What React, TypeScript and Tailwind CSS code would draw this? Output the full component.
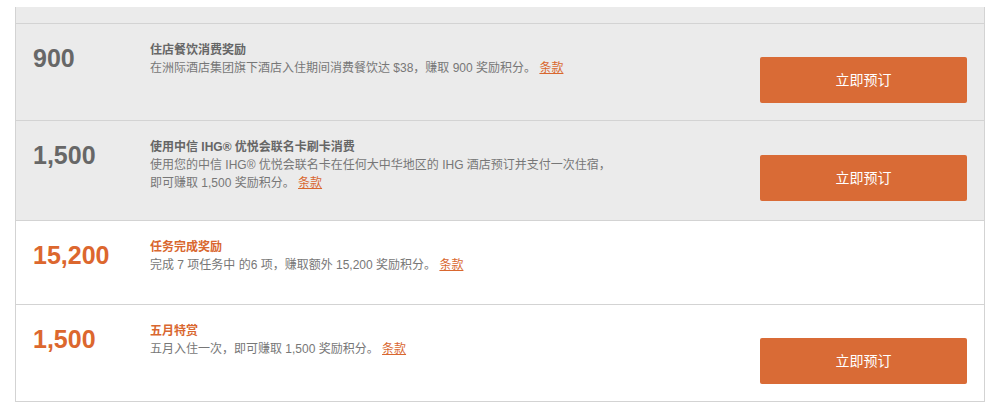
type Offer = {
  points: string;
  title: string;
  lines: string[];
  active: boolean;
  rowH: string;
  btnTop: string | null;
};

const OFFERS: Offer[] = [
  {
    points: '900',
    title: '住店餐饮消费奖励',
    lines: ['在洲际酒店集团旗下酒店入住期间消费餐饮达 $38，赚取 900 奖励积分。'],
    active: false,
    rowH: 'h-[97px]',
    btnTop: 'pt-[33px]',
  },
  {
    points: '1,500',
    title: '使用中信 IHG® 优悦会联名卡刷卡消费',
    lines: [
      '使用您的中信 IHG® 优悦会联名卡在任何大中华地区的 IHG 酒店预订并支付一次住宿，',
      '即可赚取 1,500 奖励积分。',
    ],
    active: false,
    rowH: 'h-[100px]',
    btnTop: 'pt-[34px]',
  },
  {
    points: '15,200',
    title: '任务完成奖励',
    lines: ['完成 7 项任务中 的6 项，赚取额外 15,200 奖励积分。'],
    active: true,
    rowH: 'h-[84px]',
    btnTop: null,
  },
  {
    points: '1,500',
    title: '五月特赏',
    lines: ['五月入住一次，即可赚取 1,500 奖励积分。'],
    active: true,
    rowH: 'h-[97px]',
    btnTop: 'pt-[33px]',
  },
];

const OfferRow = ({ offer }: { offer: Offer }) => (
  <div
    className={`flex border-t border-[#d3d3d3] ${offer.rowH} ${
      offer.active ? 'bg-white' : 'bg-[#ebebeb]'
    }`}
  >
    <div
      className={`w-[117px] ml-[17px] shrink-0 pt-[20px] text-[25px] leading-[28px] font-bold ${
        offer.active ? 'text-[#dc672e]' : 'text-[#676767]'
      }`}
    >
      {offer.points}
    </div>
    <div className="flex-1 pt-[17px] text-[12px] leading-[18px]">
      <div className={`font-bold ${offer.active ? 'text-[#d9672f]' : 'text-[#666666]'}`}>{offer.title}</div>
      <div className="text-[#777777]">
        {offer.lines.map((line, i) => (
          <div key={i}>
            {line}
            {i === offer.lines.length - 1 && (
              <>
                {' '}
                <a className="text-[#d9672f] underline" href="#">
                  条款
                </a>
              </>
            )}
          </div>
        ))}
      </div>
    </div>
    {offer.btnTop && (
      <div className={`${offer.btnTop} pr-[17px] shrink-0`}>
        <button className="w-[207px] h-[46px] rounded-[2px] bg-[#d96b36] text-white text-[14px]">立即预订</button>
      </div>
    )}
  </div>
);

export default function App() {
  return (
    <div
      className="w-[1000px] h-[409px] bg-white pt-[7px]"
      style={{ fontFamily: '"Liberation Sans", Arial, "Noto Sans CJK SC", sans-serif' }}
    >
      <div className="ml-[15px] w-[970px] border-x border-b border-[#d3d3d3]">
        <div className="h-[16px] bg-[#ebebeb]" />
        {OFFERS.map((offer, i) => (
          <OfferRow key={i} offer={offer} />
        ))}
      </div>
    </div>
  );
}
